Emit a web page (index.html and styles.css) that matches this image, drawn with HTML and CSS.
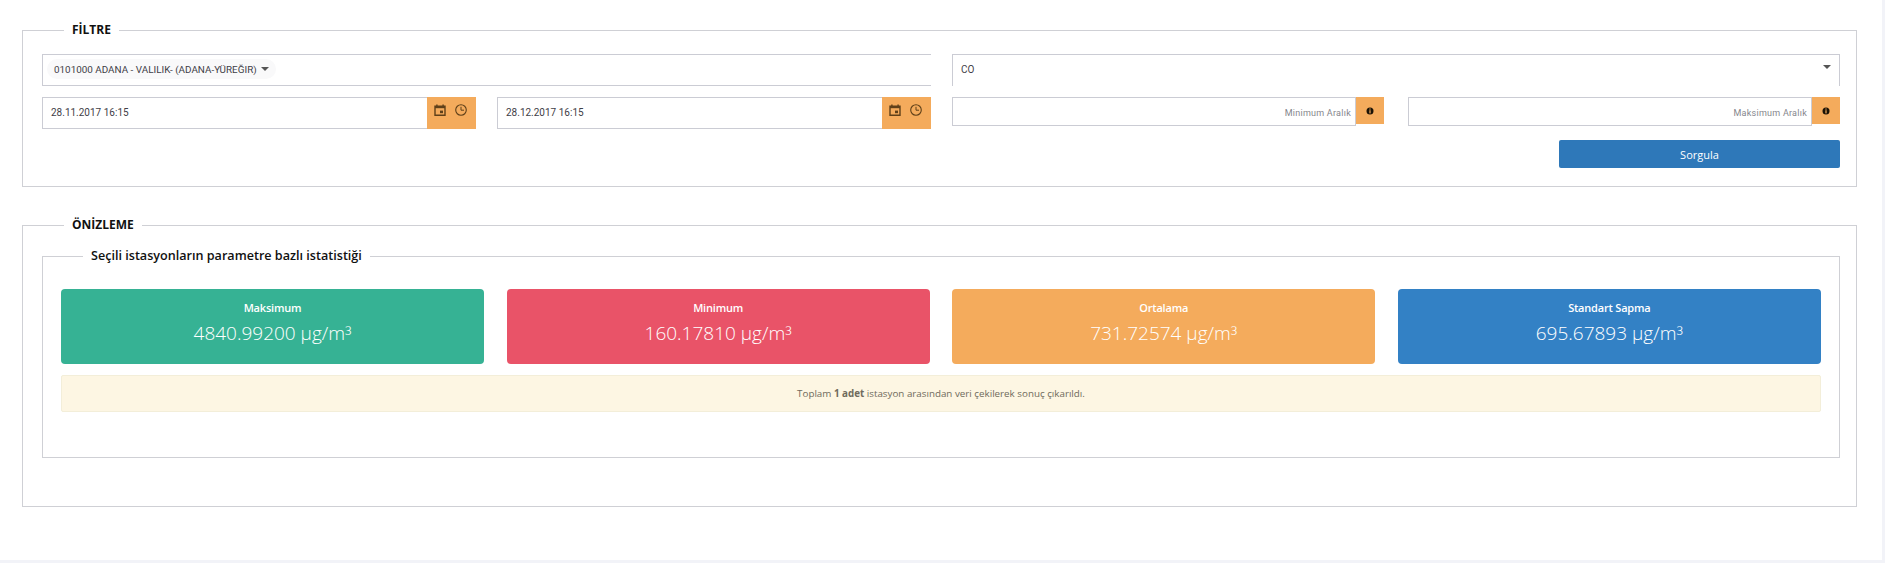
FILE: index.html
```html
<html>
    <head>
        <meta charset="utf-8">
        <title>Filtre</title>
        <link rel="stylesheet" href="styles.css">
    </head>
    <body>
        <div class="page">
            <fieldset class="box box-filter">
                <legend>FİLTRE</legend>

                <div class="filter-row">
                    <div class="select select-multi">
                        <span class="chip">0101000 ADANA - VALILIK- (ADANA-YÜREĞIR) <span class="caret"></span></span>
                    </div>
                    <div class="select select-single">
                        <span>CO</span>
                        <span class="caret"></span>
                    </div>
                </div>

                <div class="filter-row filter-row-inputs">
                    <div class="half">
                        <div class="date-field">
                            <span class="date-value">28.11.2017 16:15</span>
                            <span class="addon">
                                <svg class="icon" viewBox="0 0 12 12"><path d="M1 2.2h10v9H1z M2.9 0.6v2 M9.1 0.6v2" fill="none" stroke="#5f4019" stroke-width="1.4"/><path d="M1 2.2h10v2H1z" fill="#5f4019"/><rect x="6" y="6.6" width="3" height="2.6" fill="#5f4019"/></svg>
                                <svg class="icon" viewBox="0 0 12 12"><circle cx="6" cy="6" r="5.3" fill="none" stroke="#5f4019" stroke-width="1.1"/><path d="M6 2.8v3.4h3" fill="none" stroke="#5f4019" stroke-width="1"/></svg>
                            </span>
                        </div>
                        <div class="date-field">
                            <span class="date-value">28.12.2017 16:15</span>
                            <span class="addon">
                                <svg class="icon" viewBox="0 0 12 12"><path d="M1 2.2h10v9H1z M2.9 0.6v2 M9.1 0.6v2" fill="none" stroke="#5f4019" stroke-width="1.4"/><path d="M1 2.2h10v2H1z" fill="#5f4019"/><rect x="6" y="6.6" width="3" height="2.6" fill="#5f4019"/></svg>
                                <svg class="icon" viewBox="0 0 12 12"><circle cx="6" cy="6" r="5.3" fill="none" stroke="#5f4019" stroke-width="1.1"/><path d="M6 2.8v3.4h3" fill="none" stroke="#5f4019" stroke-width="1"/></svg>
                            </span>
                        </div>
                    </div>
                    <div class="half half-range">
                        <div class="range-field">
                            <span class="range-input">Minimum Aralık</span>
                            <span class="range-addon">
                                <svg class="info" viewBox="0 0 8 8"><circle cx="4" cy="4" r="3.5" fill="#1a1206"/><rect x="3.4" y="1.5" width="1.2" height="1.1" fill="#f4ab5c"/><rect x="3.4" y="3.2" width="1.2" height="3.2" fill="#f4ab5c"/></svg>
                            </span>
                        </div>
                        <div class="range-field">
                            <span class="range-input">Maksimum Aralık</span>
                            <span class="range-addon">
                                <svg class="info" viewBox="0 0 8 8"><circle cx="4" cy="4" r="3.5" fill="#1a1206"/><rect x="3.4" y="1.5" width="1.2" height="1.1" fill="#f4ab5c"/><rect x="3.4" y="3.2" width="1.2" height="3.2" fill="#f4ab5c"/></svg>
                            </span>
                        </div>
                    </div>
                </div>

                <div class="actions">
                    <button class="btn-query">Sorgula</button>
                </div>
            </fieldset>

            <fieldset class="box box-preview">
                <legend>ÖNİZLEME</legend>

                <fieldset class="box box-inner">
                    <legend>Seçili istasyonların parametre bazlı istatistiği</legend>

                    <div class="cards">
                        <div class="card card-green">
                            <div class="card-title">Maksimum</div>
                            <div class="card-value">4840.99200 µg/m<span class="cube">³</span></div>
                        </div>
                        <div class="card card-red">
                            <div class="card-title">Minimum</div>
                            <div class="card-value">160.17810 µg/m<span class="cube">³</span></div>
                        </div>
                        <div class="card card-orange">
                            <div class="card-title">Ortalama</div>
                            <div class="card-value">731.72574 µg/m<span class="cube">³</span></div>
                        </div>
                        <div class="card card-blue">
                            <div class="card-title">Standart Sapma</div>
                            <div class="card-value">695.67893 µg/m<span class="cube">³</span></div>
                        </div>
                    </div>

                    <div class="alert">Toplam <b>1 adet</b> istasyon arasından veri çekilerek sonuç çıkarıldı.</div>
                </fieldset>
            </fieldset>
        </div>
    </body>
</html>
```

FILE: styles.css
```css
html, body
{
    margin: 0;
    padding: 0;
    height: 563px;
    overflow: hidden;
    background: #f2f3f8;
}

.page
{
    box-sizing: border-box;
    width: 1882px;
    height: 560px;
    padding: 21px 25px 0 22px;
    background: #fff;
    font-family: "Open Sans", sans-serif;
    color: #575962;
}

.box
{
    margin: 0;
    min-width: 0;
    border: 1px solid #cfd0d5;
    box-sizing: border-box;
}

.box legend
{
    padding: 0 8px;
    font-size: 12px;
    font-weight: 700;
    line-height: 18px;
    color: #111;
}

.box-filter
{
    height: 166px;
    padding: 15px 16px 0 19px;
}

.box-filter > legend
{
    margin-left: 22px;
}

.filter-row
{
    display: grid;
    grid-template-columns: 889px 888px;
    column-gap: 21px;
}

.filter-row-inputs
{
    margin-top: 11px;
}

.select
{
    box-sizing: border-box;
    height: 32px;
    padding-bottom: 2px;
    border: 1px solid #cbccd4;
    font-family: Roboto, sans-serif;
    font-size: 10px;
    color: #3f4047;
}

.select-multi
{
    border-right: 0;
    display: flex;
    align-items: center;
    padding-left: 4px;
}

.chip
{
    display: inline-flex;
    align-items: center;
    gap: 2px;
    height: 20px;
    padding: 0 7px 0 7px;
    border-radius: 10px;
    background: #f9f9fa;
    white-space: pre;
    font-size: 9.9px;
}

.select-single
{
    border-bottom: 0;
    display: flex;
    align-items: center;
    justify-content: space-between;
    padding-left: 8px;
    padding-right: 8px;
}

.select-single .caret
{
    margin-top: -5px;
}

.caret
{
    display: inline-block;
    width: 0;
    height: 0;
    border-left: 4px solid transparent;
    border-right: 4px solid transparent;
    border-top: 4px solid #555;
}

.half
{
    display: grid;
    grid-template-columns: 434px 434px;
    column-gap: 21px;
    align-items: start;
}

.half-range
{
    grid-template-columns: 432px 432px;
    column-gap: 24px;
}

.date-field
{
    box-sizing: border-box;
    height: 32px;
    display: flex;
    border: 1px solid #cbccd4;
    border-right: 0;
    font-family: Roboto, sans-serif;
    font-size: 10px;
    color: #3f4047;
}

.date-value
{
    flex: 1;
    line-height: 30px;
    padding-left: 8px;
}

.addon
{
    width: 49px;
    margin: -1px 0;
    background: #f4ab5c;
    display: flex;
    gap: 9px;
    padding: 7px 0 0 7px;
    box-sizing: border-box;
}

.icon
{
    width: 12px;
    height: 12px;
}

.range-field
{
    height: 29px;
    display: flex;
    align-items: flex-start;
}

.range-input
{
    box-sizing: border-box;
    flex: 1;
    height: 29px;
    border: 1px solid #cbccd4;
    text-align: right;
    padding: 9px 4px 0 0;
    font-family: Roboto, sans-serif;
    font-size: 9px;
    line-height: 12px;
    letter-spacing: 0.25px;
    color: #85868c;
}

.range-addon
{
    width: 28px;
    height: 27px;
    background: #f4ab5c;
    display: flex;
    align-items: center;
    justify-content: center;
}

.info
{
    width: 8px;
    height: 8px;
}

.actions
{
    display: flex;
    justify-content: flex-end;
    margin-top: 11px;
}

.btn-query
{
    width: 281px;
    height: 28px;
    padding: 0;
    border: 0;
    border-radius: 2px;
    background: #2e78b9;
    color: #fff;
    font-family: "Open Sans", sans-serif;
    font-size: 11px;
}

.box-preview
{
    height: 291px;
    margin-top: 29px;
    padding: 13px 16px 0 19px;
}

.box-preview > legend
{
    margin-left: 22px;
}

.box-inner
{
    height: 211px;
    padding: 24px 18px 0 18px;
}

.box-inner > legend
{
    margin-left: 22px;
    font-weight: 600;
    font-size: 12.6px;
}

.cards
{
    display: grid;
    grid-template-columns: repeat(4, 423px);
    column-gap: 22.6px;
}

.card
{
    height: 75px;
    border-radius: 4px;
    color: #fff;
    text-align: center;
    padding-top: 11px;
    box-sizing: border-box;
}

.card-green { background: #36b294; }
.card-red { background: #e95368; }
.card-orange { background: #f4ab5c; }
.card-blue { background: #3381c5; }

.card-title
{
    font-size: 11px;
    font-weight: 600;
    line-height: 16px;
    letter-spacing: -0.2px;
}

.card-value
{
    font-size: 19px;
    font-weight: 300;
    line-height: 32px;
    margin-top: 1px;
}

.cube
{
    vertical-align: -3px;
}

.alert
{
    box-sizing: border-box;
    height: 37px;
    margin-top: 11px;
    border: 1px solid #f3eed9;
    border-radius: 2px;
    background: #fdf6e3;
    text-align: center;
    font-size: 9.8px;
    line-height: 35px;
    color: #6f6a5c;
}
```
